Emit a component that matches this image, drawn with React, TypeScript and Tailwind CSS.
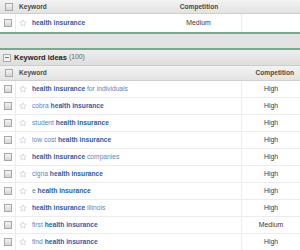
import React from "react";

const ideas: { pre?: string; post?: string; comp: string }[] = [
  { post: " for individuals", comp: "High" },
  { pre: "cobra ", comp: "High" },
  { pre: "student ", comp: "High" },
  { pre: "low cost ", comp: "High" },
  { post: " companies", comp: "High" },
  { pre: "cigna ", comp: "High" },
  { pre: "e ", comp: "High" },
  { post: " illinois", comp: "High" },
  { pre: "first ", comp: "Medium" },
  { pre: "find ", comp: "High" },
];

function Checkbox() {
  return (
    <span className="block w-[8px] h-[8px] border border-[#a9a9a9] bg-gradient-to-b from-[#f4f4f4] to-[#d6d6d6]" />
  );
}

function Star() {
  return (
    <svg width="8" height="8" viewBox="0 0 24 24" className="shrink-0">
      <path
        d="M12 2.5l2.9 6.3 6.9.7-5.2 4.6 1.5 6.8L12 17.4l-6.1 3.5 1.5-6.8-5.2-4.6 6.9-.7z"
        fill="none"
        stroke="#bcc6d6"
        strokeWidth="1.8"
        strokeLinejoin="round"
      />
    </svg>
  );
}

function Kw({ pre, post }: { pre?: string; post?: string }) {
  return (
    <span className="text-[6.7px] text-[#5a86c4] whitespace-nowrap">
      {pre}
      <span className="font-bold text-[#2c60ad]">health insurance</span>
      {post}
    </span>
  );
}

export default function App() {
  return (
    <div
      className="w-[300px] h-[250px] overflow-hidden bg-white text-[#333]"
      style={{ fontFamily: '"Liberation Sans", Arial, sans-serif' }}
    >
      {/* top table */}
      <div className="flex h-[14px] items-center bg-gradient-to-b from-[#f3f3f3] to-[#e2e2e2] border-b border-[#cfcfcf]">
        <div className="w-[16px] flex justify-center pl-[1px]">
          <Checkbox />
        </div>
        <div className="w-[140px] pl-[3px] text-[6.6px] font-bold text-[#4a4a4a]">Keyword</div>
        <div className="w-[86px] text-center text-[6.6px] font-bold text-[#4a4a4a]">Competition</div>
      </div>
      <div className="flex h-[18px] items-stretch bg-white">
        <div className="w-[16px] flex items-center justify-center pl-[1px] border-r border-[#ececec]">
          <Checkbox />
        </div>
        <div className="w-[140px] flex items-center gap-[5px] pl-[3px]">
          <Star />
          <Kw />
        </div>
        <div className="w-[86px] flex items-center justify-center text-[6.9px] text-[#3a3a3a] border-r border-[#ececec]">
          Medium
        </div>
      </div>
      <div className="h-[18px] bg-[#e3e3e3] border-y-[2px] border-[#75ab8f]" />

      {/* keyword ideas */}
      <div className="flex h-[16px] items-center gap-[2px] pl-[3px] bg-gradient-to-b from-[#eeeeee] to-[#dedede] border-b border-[#cdcdcd]">
        <span className="w-[8px] h-[8px] border border-[#aaaaaa] bg-[#f2f2f2] flex items-center justify-center">
          <span className="block w-[4px] h-px bg-[#777]" />
        </span>
        <span className="text-[7.5px] font-bold text-[#222] ml-[1px]">Keyword ideas</span>
        <span className="text-[6.8px] text-[#666]">(100)</span>
      </div>
      <div className="flex h-[15px] items-center bg-gradient-to-b from-[#f3f3f3] to-[#e3e3e3] border-b border-[#d0d0d0]">
        <div className="w-[16px] flex justify-center pl-[1px]">
          <Checkbox />
        </div>
        <div className="w-[226px] pl-[3px] text-[6.6px] font-bold text-[#4a4a4a]">Keyword</div>
        <div className="w-[58px] text-right pr-[6px] text-[6.6px] font-bold text-[#4a4a4a]">Competition</div>
      </div>
      {ideas.map((r, i) => (
        <div key={i} className="flex h-[17px] items-stretch border-b border-[#ececec]">
          <div className="w-[16px] flex items-center justify-center pl-[1px] border-r border-[#ececec]">
            <Checkbox />
          </div>
          <div className="w-[226px] flex items-center gap-[5px] pl-[3px] border-r border-[#ececec]">
            <Star />
            <Kw pre={r.pre} post={r.post} />
          </div>
          <div className="w-[58px] flex items-center justify-center text-[6.9px] text-[#3a3a3a]">{r.comp}</div>
        </div>
      ))}
    </div>
  );
}
